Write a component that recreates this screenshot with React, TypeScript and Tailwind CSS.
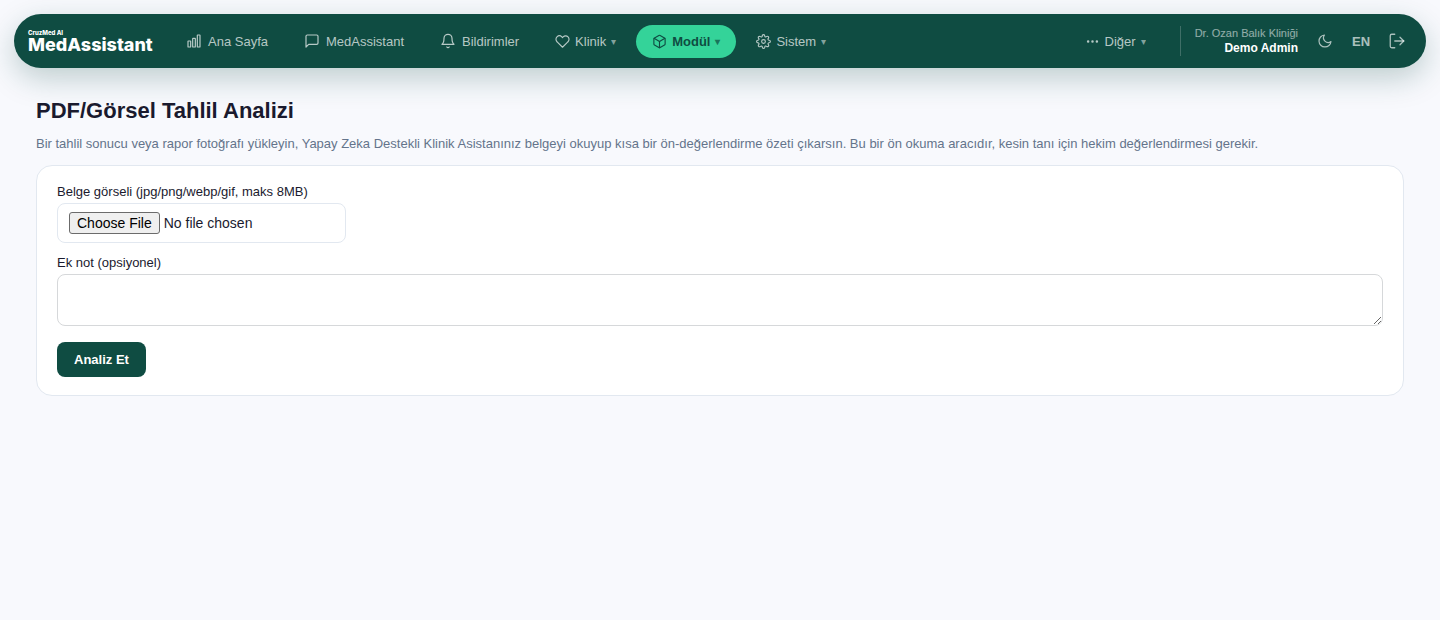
import React from "react";
import type { ReactNode } from "react";
import {
  FiBell,
  FiBox,
  FiHeart,
  FiLogOut,
  FiMessageSquare,
  FiMoon,
  FiMoreHorizontal,
  FiSettings,
} from "react-icons/fi";

function BarsIcon() {
  return (
    <svg
      viewBox="0 0 24 24"
      className="size-4 shrink-0"
      fill="none"
      stroke="currentColor"
      strokeWidth="1.8"
      strokeLinejoin="round"
      aria-hidden="true"
    >
      <rect x="3" y="12" width="4" height="9" rx="0.5" />
      <rect x="10" y="8" width="4" height="13" rx="0.5" />
      <rect x="17" y="3" width="4" height="18" rx="0.5" />
    </svg>
  );
}

function NavLink({ icon, children }: { icon: ReactNode; children: ReactNode }) {
  return (
    <a href="#" className="flex h-[33px] items-center gap-1.5 rounded-full px-4 text-white/70">
      {icon}
      {children}
    </a>
  );
}

function NavMenu({ icon, active, children }: { icon: ReactNode; active?: boolean; children: ReactNode }) {
  const tone = active ? "bg-[#34d399] font-bold text-[#0f4c42]" : "text-white/70";
  return (
    <button type="button" className={`flex h-[33px] items-center gap-[5px] rounded-full px-4 ${tone}`}>
      {icon}
      {children}
      <span className="text-[10px] opacity-70">▾</span>
    </button>
  );
}

export default function App() {
  return (
    <div className="min-h-screen bg-[#f8f9fd] font-['Liberation_Sans',Arial,sans-serif] text-[13px] leading-[15px] text-[#1a1a2e]">
      <header className="px-3.5 pt-3.5">
        <nav className="flex h-[54px] items-center rounded-full bg-[#0f4c42] pr-3 pl-3.5 whitespace-nowrap shadow-[0_10px_30px_rgba(15,76,66,0.25)]">
          <a href="#" className="flex w-[125px] flex-col pt-0.5 font-[Inter,sans-serif] font-extrabold text-white">
            <span className="text-[6px] leading-[6px]">CruzMed AI</span>
            <span className="text-[18px] leading-[18px]">MedAssistant</span>
          </a>
          <div className="ml-[17px] flex flex-1 items-center gap-1">
            <NavLink icon={<BarsIcon />}>Ana Sayfa</NavLink>
            <NavLink icon={<FiMessageSquare size={16} strokeWidth={1.8} />}>MedAssistant</NavLink>
            <NavLink icon={<FiBell size={16} strokeWidth={1.8} />}>Bildirimler</NavLink>
            <NavMenu icon={<FiHeart size={15} strokeWidth={1.8} />}>Klinik</NavMenu>
            <NavMenu active icon={<FiBox size={15} strokeWidth={1.8} />}>Modül</NavMenu>
            <NavMenu icon={<FiSettings size={15} strokeWidth={1.8} />}>Sistem</NavMenu>
          </div>
          <NavMenu icon={<FiMoreHorizontal size={15} />}>Diğer</NavMenu>
          <div className="ml-[18px] flex h-[30px] flex-col justify-center border-l border-white/20 pl-[14px] text-right">
            <span className="text-[11px] text-white/55">Dr. Ozan Balık Kliniği</span>
            <span className="text-xs leading-[15px] font-bold text-white">Demo Admin</span>
          </div>
          <div className="ml-2.5 flex items-center text-white/65">
            <button type="button" aria-label="Tema" className="flex h-8 w-[34px] items-center justify-center">
              <FiMoon size={16} strokeWidth={1.8} />
            </button>
            <button type="button" className="h-8 w-[38px] font-bold">EN</button>
            <a href="#" aria-label="Çıkış" className="flex h-8 w-[34px] items-center justify-center">
              <FiLogOut size={18} strokeWidth={1.7} />
            </a>
          </div>
        </nav>
      </header>

      <main className="px-9 pt-[30px]">
        <h1 className="text-[22px] leading-[26px] font-bold">PDF/Görsel Tahlil Analizi</h1>
        <p className="mt-3 text-[#64748b]">
          Bir tahlil sonucu veya rapor fotoğrafı yükleyin, Yapay Zeka Destekli Klinik Asistanınız belgeyi okuyup kısa
          bir ön-değerlendirme özeti çıkarsın. Bu bir ön okuma aracıdır, kesin tanı için hekim değerlendirmesi gerekir.
        </p>
        <form className="mt-3.5 flex flex-col items-start rounded-2xl border border-[#e2e8f0] bg-white px-5 py-[18px]">
          <label htmlFor="belge">Belge görseli (jpg/png/webp/gif, maks 8MB)</label>
          <input
            id="belge"
            type="file"
            accept="image/*"
            className="mt-1 h-10 w-[289px] rounded-lg border border-[#e2e8f0] px-[11px] py-2 text-sm leading-4 file:mr-1 file:h-[22px] file:rounded-[3px] file:border file:border-solid file:border-[#6b6b6b] file:bg-[#efefef] file:px-[7px] file:text-black"
          />
          <label htmlFor="not" className="mt-3">Ek not (opsiyonel)</label>
          <textarea
            id="not"
            className="mt-1 h-[52px] w-full rounded-lg border border-[#d6d8da] bg-white px-2.5 py-2 text-sm"
          />
          <button type="button" className="mt-4 h-[35px] rounded-lg bg-[#0f4c42] px-[17px] font-bold text-white">
            Analiz Et
          </button>
        </form>
      </main>
    </div>
  );
}
